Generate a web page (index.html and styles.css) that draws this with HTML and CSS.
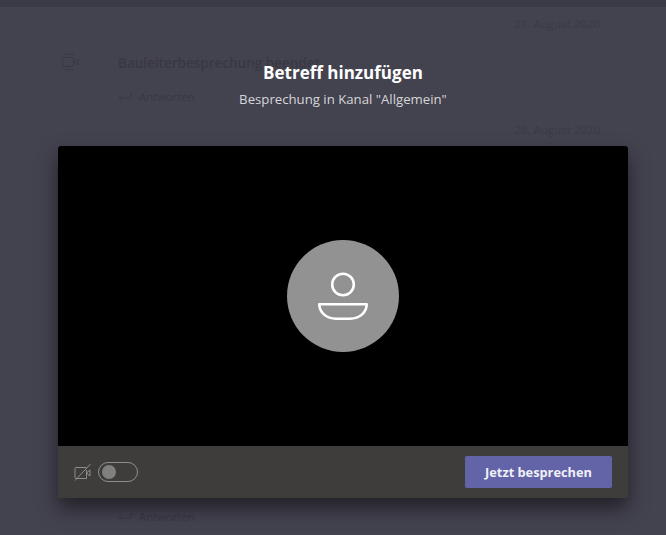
FILE: index.html
```html
<!DOCTYPE html>
<html lang="de">
<head>
<meta charset="utf-8">
<title>Betreff hinzufügen</title>
<link rel="stylesheet" href="styles.css">
</head>
<body>
<div class="topbar"></div>
<main class="feed">
  <div class="date date-first">21. August 2020</div>
  <div class="meeting">
    <div class="meeting-icon">
      <svg width="20" height="20" viewBox="0 0 20 20" fill="none" stroke="#383743" stroke-width="1">
        <rect x="3.5" y="5.5" width="11" height="9" rx="2"/>
        <path d="M15 10l4-3v6z"/>
        <path d="M6 3a9 9 0 0 1 9 0M6 17a9 9 0 0 0 9 0"/>
      </svg>
    </div>
    <div class="meeting-body">
      <div class="meeting-title">Bauleiterbesprechung beendet</div>
      <div class="reply">
        <svg width="14" height="10" viewBox="0 0 14 10" fill="none" stroke="#383743" stroke-width="1"><path d="M13 1v3.500a1.500 1.500 0 0 1-1.500 1.500H1M4 3L1 6l3 3"/></svg>
        <span>Antworten</span>
      </div>
    </div>
  </div>
  <div class="date date-second">28. August 2020</div>
  <div class="reply reply-bottom">
    <svg width="14" height="10" viewBox="0 0 14 10" fill="none" stroke="#383743" stroke-width="1"><path d="M13 1v3.500a1.500 1.500 0 0 1-1.500 1.500H1M4 3L1 6l3 3"/></svg>
    <span>Antworten</span>
  </div>
</main>
<section class="overlay">
  <h1 class="title">Betreff hinzufügen</h1>
  <p class="subtitle">Besprechung in Kanal "Allgemein"</p>
  <div class="dialog">
    <div class="video">
      <div class="avatar">
        <svg width="54" height="50" viewBox="0 0 54 50" fill="none" stroke="#fff" stroke-width="2.600">
          <circle cx="27" cy="13.500" r="10.800"/>
          <path d="M3.300 33.300H50.700C50.700 41 44 47.700 34 47.700H20C10 47.700 3.300 41 3.300 33.300z" stroke-linejoin="round"/>
        </svg>
      </div>
    </div>
    <div class="controls">
      <div class="cam">
        <svg class="cam-icon" width="18" height="18" viewBox="0 0 18 18" fill="none" stroke="#8f8e8b" stroke-width="1">
          <path d="M12.500 4.500H2a1 1 0 0 0-1 1v9a1 1 0 0 0 1 1h10.500V7"/>
          <path d="M12.500 10l3.500-3v6z"/>
          <path d="M1 17.500L16.500 1"/>
        </svg>
        <div class="toggle"><span class="knob"></span></div>
      </div>
      <button class="start">Jetzt besprechen</button>
    </div>
  </div>
</section>
</body>
</html>
```
FILE: styles.css
```css
* { box-sizing: border-box; }
html, body { margin: 0; height: 100%; }
body {
  position: relative;
  height: 535px;
  overflow: hidden;
  background: #43424f;
  font-family: "Open Sans", "Liberation Sans", sans-serif;
  color: #393844;
}
.topbar { height: 7px; background: #3b3a47; }
.feed { display: flex; flex-direction: column; padding: 0 66px 0 58px; }
.date { font-size: 11.500px; line-height: 16px; text-align: right; color: #3b3a46; }
.date-first { margin-top: 9px; }
.meeting { display: flex; margin-top: 20px; }
.meeting-icon { width: 22px; display: flex; justify-content: center; }
.meeting-body { margin-left: 38px; padding-top: 2px; }
.meeting-title { font-size: 13.500px; font-weight: 600; line-height: 18px; }
.reply { display: flex; align-items: center; gap: 7px; font-size: 11.300px; line-height: 16px; margin-top: 17px; }
.date-second { margin-top: 17px; }
.reply-bottom { margin: 371px 0 0 60px; }
.overlay {
  position: absolute;
  inset: 0;
  display: flex;
  flex-direction: column;
  align-items: center;
  padding: 62px 38px 0 58px;
}
.title { margin: 0; font-size: 17px; line-height: 22px; font-weight: 700; color: #fff; }
.subtitle { margin: 6px 0 0; font-size: 13.200px; line-height: 18px; color: #d6d6d8; }
.dialog {
  width: 570px;
  margin-top: 38px;
  border-radius: 3px;
  overflow: hidden;
  box-shadow: 0 10px 20px rgba(0,0,0,.5);
}
.video { height: 300px; background: #000; display: flex; align-items: center; justify-content: center; }
.avatar {
  width: 112px; height: 112px; border-radius: 50%;
  background: #929292;
  display: flex; align-items: center; justify-content: center;
}
.controls {
  height: 52px;
  background: #3e3d3b;
  display: flex;
  align-items: center;
  justify-content: space-between;
  padding: 0 16px;
}
.cam { display: flex; align-items: center; gap: 6px; }
.toggle {
  width: 40px; height: 20px; border: 1px solid #8f8e8b; border-radius: 10px;
  display: flex; align-items: center; padding-left: 3px;
}
.knob { width: 14px; height: 14px; border-radius: 50%; background: #808080; }
.start {
  width: 147px; height: 32px; border: 0; border-radius: 2px;
  background: #6264a7; color: #f0f0f8;
  font-family: inherit; font-size: 12.800px; font-weight: 700;
}
```
